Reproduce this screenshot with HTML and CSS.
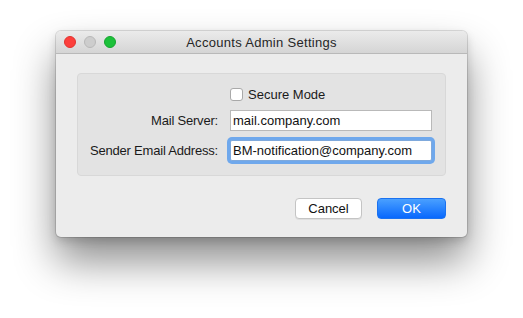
FILE: index.html
```html
<!DOCTYPE html>
<html lang="en">

<head>
    <meta charset="UTF-8">
    <meta name="viewport" content="width=device-width, initial-scale=1.0">
    <title>Accounts Admin Settings</title>
    <link rel="stylesheet" href="styles.css">
</head>

<body>
    <div class="window">
        <div class="titlebar">
            <div class="lights">
                <span class="light close"></span>
                <span class="light mini"></span>
                <span class="light zoom"></span>
            </div>
            <div class="title">Accounts Admin Settings</div>
            <div></div>
        </div>
        <div class="content">
            <form class="panel">
                <div></div>
                <label class="check-row">
                    <span class="checkbox"></span>
                    <span>Secure Mode</span>
                </label>
                <label class="field-label" for="mail-server">Mail Server:</label>
                <input class="field" type="text" id="mail-server" value="mail.company.com">
                <label class="field-label" for="sender-email">Sender Email Address:</label>
                <input class="field focused" type="text" id="sender-email" value="BM-notification@company.com">
            </form>
            <div class="btn-group">
                <button class="btn">Cancel</button>
                <button class="btn primary">OK</button>
            </div>
        </div>
    </div>
</body>

</html>
```

FILE: styles.css
```css
html {
    height: 100%;
    background: #ffffff;
}

body {
    box-sizing: border-box;
    min-height: 100%;
    margin: 0;
    padding: 31px 0 0 56px;
    background: #ffffff;
    font-family: 'Liberation Sans', Arial, sans-serif;
    font-size: 13px;
    color: #1a1a1a;
    overflow: hidden;
}

.window {
    width: 411px;
    height: 206px;
    background-color: #ececec;
    border-radius: 5px;
    box-shadow: 0 0 0 1px rgba(0, 0, 0, 0.12), 0 4px 10px rgba(0, 0, 0, 0.15), 0 24px 42px rgba(0, 0, 0, 0.45);
    overflow: hidden;
}

.titlebar {
    display: grid;
    grid-template-columns: 1fr auto 1fr;
    align-items: center;
    height: 22px;
    background: linear-gradient(to bottom, #ebebeb, #d5d5d5);
    border-bottom: 1px solid #b9b9b9;
}

.lights {
    display: flex;
    gap: 8px;
    padding-left: 8px;
}

.light {
    width: 10px;
    height: 10px;
    border-radius: 50%;
    border: 1px solid;
}

.close {
    background-color: #fc3f3c;
    border-color: #e0332f;
}

.mini {
    background-color: #cdcdcd;
    border-color: #b8b8b8;
}

.zoom {
    background-color: #1cc13a;
    border-color: #16a42f;
}

.title {
    color: #262626;
    letter-spacing: 0.3px;
}

.content {
    padding: 19px 21px 0 21px;
}

.panel {
    display: grid;
    grid-template-columns: 140px 202px;
    column-gap: 12px;
    row-gap: 9px;
    align-items: center;
    padding: 14px 0 14px 0;
    background-color: #e3e3e3;
    border: 1px solid #d8d8d8;
    border-radius: 4px;
}

.check-row {
    display: flex;
    align-items: center;
    gap: 5px;
    height: 13px;
}

.checkbox {
    width: 11px;
    height: 11px;
    background-color: #ffffff;
    border: 1px solid #a9a9a9;
    border-radius: 3px;
}

.field-label {
    text-align: right;
    letter-spacing: -0.2px;
}

.field {
    box-sizing: border-box;
    width: 202px;
    height: 21px;
    margin: 0;
    padding: 0 2px;
    border: 1px solid #b9b9b9;
    background-color: #ffffff;
    font-family: inherit;
    font-size: 13px;
    color: #111111;
    outline: none;
}

.focused {
    border-color: #7fa9dc;
    box-shadow: 0 0 0 3px #6fa8ec;
    border-radius: 2px;
}

.btn-group {
    display: flex;
    justify-content: flex-end;
    gap: 15px;
    margin-top: 22px;
}

.btn {
    box-sizing: border-box;
    height: 21px;
    padding: 0;
    font-family: inherit;
    font-size: 13px;
    border-radius: 4px;
    cursor: pointer;
}

.btn:first-child {
    width: 67px;
    background-color: #ffffff;
    color: #111111;
    border: 1px solid #c4c4c4;
    box-shadow: 0 1px 0 rgba(0, 0, 0, 0.06);
}

.primary {
    width: 69px;
    color: #ffffff;
    border: 1px solid #1b72f0;
    background: linear-gradient(to bottom, #4aa0ff, #0868fd);
}
```
